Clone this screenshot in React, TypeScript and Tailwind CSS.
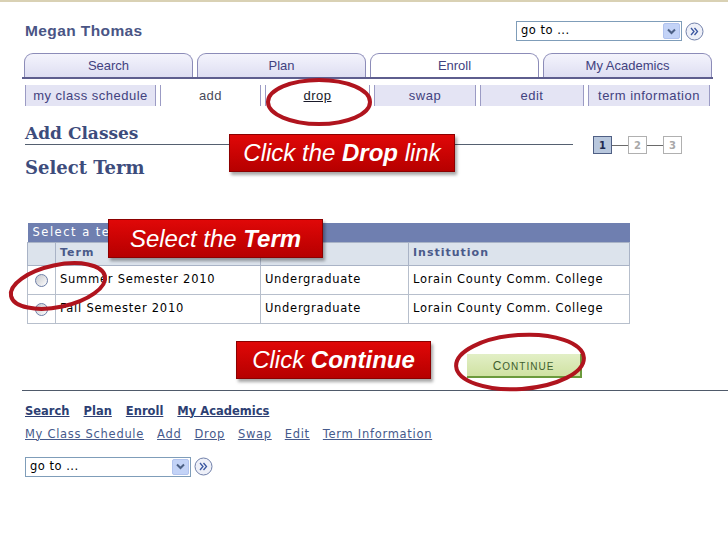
import React from "react";

const verdana = "font-['DejaVu_Sans',Verdana,sans-serif]";
const arial = "font-['Liberation_Sans',Arial,sans-serif]";
const serif = "font-['DejaVu_Serif',Georgia,serif]";

const tabs = [
  { label: "Search", active: false },
  { label: "Plan", active: false },
  { label: "Enroll", active: true },
  { label: "My Academics", active: false },
];

const subTabs = [
  { label: "my class schedule", cls: "w-[131px] bg-[#e4e4f4] text-[#42427f]" },
  { label: "add", cls: "w-[101px] bg-white text-[#4a4a5a]" },
  { label: "drop", cls: "w-[105px] bg-white text-[#1a1a2a] underline" },
  { label: "swap", cls: "w-[102px] bg-[#e4e4f4] text-[#42427f]" },
  { label: "edit", cls: "w-[104px] bg-[#e4e4f4] text-[#42427f]" },
  { label: "term information", cls: "w-[122px] bg-[#e4e4f4] text-[#42427f]" },
];

const terms = ["Summer Semester 2010", "Fall Semester 2010"];

function GoTo() {
  return (
    <div className="flex items-center gap-[3px]">
      <div className="flex h-[20px] w-[166px] items-center border border-[#7f9db9] bg-white pl-[4px] pr-[1px]">
        <span className={`flex-1 text-[11.5px] tracking-[0.5px] text-black ${verdana}`}>go to ...</span>
        <span className="flex h-[16px] w-[17px] items-center justify-center rounded-[2px] border border-[#b1c3ee] bg-[#c3d3f7]">
          <svg width="9" height="7" viewBox="0 0 9 7">
            <path d="M1 1.5 L4.5 5 L8 1.5" stroke="#4d6185" strokeWidth="2" fill="none" />
          </svg>
        </span>
      </div>
      <svg width="19" height="19" viewBox="0 0 19 19">
        <circle cx="9.5" cy="9.5" r="8.5" fill="#eef0f8" stroke="#7180aa" />
        <path d="M6 6 L9 9.5 L6 13 M9.5 6 L12.5 9.5 L9.5 13" stroke="#3a56a0" strokeWidth="1.3" fill="none" />
      </svg>
    </div>
  );
}

function Callout({ className, children }: { className: string; children: React.ReactNode }) {
  return (
    <div
      className={`absolute flex items-center justify-center border border-[#8c0000] bg-linear-to-b from-[#e00808] to-[#b60000] text-[24px] italic text-white shadow-[2px_3px_3px_rgba(0,0,0,0.35)] ${arial} ${className}`}
    >
      {children}
    </div>
  );
}

function Step({ n, on }: { n: number; on?: boolean }) {
  return (
    <div
      className={
        on
          ? `flex h-[18px] w-[19px] items-center justify-center border border-[#4f5f84] bg-[#b8c7dd] text-[10px] font-bold text-[#1d2a4f] ${verdana}`
          : `flex h-[18px] w-[19px] items-center justify-center border border-[#b0b0b0] bg-white text-[10px] font-bold text-[#a8a8a8] ${verdana}`
      }
    >
      {n}
    </div>
  );
}

export default function App() {
  return (
    <div className="relative h-[546px] w-[728px] overflow-hidden border-t-2 border-[#d9d1b4] bg-white">
      {/* header */}
      <div className="mt-[18px] flex h-[22px] items-center justify-between pl-[25px] pr-[24px]">
        <span className={`text-[15.5px] font-bold tracking-[0.4px] text-[#4a5585] ${arial}`}>Megan Thomas</span>
        <GoTo />
      </div>

      {/* tabs */}
      <div className="mt-[11px] ml-[22px] flex w-[691px] gap-[4px] border-b-2 border-[#5e5e8e] pl-[2px] pr-[1px]">
        {tabs.map((t) => (
          <div
            key={t.label}
            className={
              t.active
                ? `flex h-[24px] flex-1 items-center justify-center rounded-t-[9px] border border-b-0 border-[#8c8cb8] bg-white text-[13px] text-[#42427f] ${arial}`
                : `flex h-[24px] flex-1 items-center justify-center rounded-t-[9px] border border-b-0 border-[#8c8cb8] bg-linear-to-b from-[#f4f4fc] to-[#dedef2] text-[13px] text-[#42427f] ${arial}`
            }
          >
            {t.label}
          </div>
        ))}
      </div>

      {/* sub tabs */}
      <div className="mt-[6px] ml-[25px] flex h-[21px] gap-[4px]">
        {subTabs.map((s) => (
          <div
            key={s.label}
            className={`flex items-center justify-center border-x border-[#9b9bc4] text-[13px] tracking-[0.5px] ${arial} ${s.cls}`}
          >
            {s.label}
          </div>
        ))}
      </div>

      {/* page title */}
      <div className="mt-[16px] ml-[25px] flex items-end">
        <div className="w-[548px] border-b border-[#556070]">
          <div className={`text-[17px] font-bold leading-[22px] text-[#3d4c7c] ${serif}`}>Add Classes</div>
        </div>
        <div className="ml-[20px] -mb-[9px] flex items-center">
          <Step n={1} on />
          <div className="w-[16px] border-t border-[#6a6a6a]" />
          <Step n={2} />
          <div className="w-[16px] border-t border-[#6a6a6a]" />
          <Step n={3} />
        </div>
      </div>
      <div className={`mt-[12px] ml-[25px] text-[18px] font-bold leading-[22px] text-[#3d4c7c] ${serif}`}>Select Term</div>

      {/* term table */}
      <table className={`mt-[44px] ml-[27px] w-[602px] table-fixed border-collapse ${verdana}`}>
        <colgroup>
          <col className="w-[28px]" />
          <col className="w-[205px]" />
          <col className="w-[148px]" />
          <col className="w-[221px]" />
        </colgroup>
        <tbody>
          <tr className="h-[19px] bg-[#6f7fb0]">
            <td colSpan={4} className="pl-[5px] text-[11.5px] tracking-[1.5px] text-white">
              Select a term
            </td>
          </tr>
          <tr className="h-[23px] bg-[#dce3ec]">
            <td className="border border-[#a9b3c6]" />
            <td className="border border-[#a9b3c6] pl-[4px] text-[11px] font-bold tracking-[1px] text-[#4a5a8a]">Term</td>
            <td className="border border-[#a9b3c6] pl-[4px] text-[11px] font-bold tracking-[1px] text-[#4a5a8a]">Career</td>
            <td className="border border-[#a9b3c6] pl-[4px] text-[11px] font-bold tracking-[1px] text-[#4a5a8a]">Institution</td>
          </tr>
          {terms.map((t) => (
            <tr key={t} className="h-[29px] bg-white">
              <td className="border border-[#b7bfcc] text-center">
                <span className="inline-block h-[13px] w-[13px] rounded-full border border-[#6f80a8] bg-linear-to-br from-[#c4c6cc] to-white align-middle" />
              </td>
              <td className="border border-[#b7bfcc] pl-[4px] text-[11.5px] tracking-[0.75px] text-black">{t}</td>
              <td className="border border-[#b7bfcc] pl-[4px] text-[11.5px] tracking-[0.7px] text-black">Undergraduate</td>
              <td className="border border-[#b7bfcc] pl-[4px] text-[11.5px] tracking-[0.7px] text-black">Lorain County Comm. College</td>
            </tr>
          ))}
        </tbody>
      </table>

      {/* continue */}
      <div className="mt-[30px] ml-[467px] flex h-[24px] w-[115px] items-center justify-center border-r-2 border-b-2 border-[#6b9a3c] bg-linear-to-b from-[#e2efc6] to-[#d0e2a2]">
        <span className={`tracking-[1px] text-[#3f5f2f] ${arial}`}>
          <span className="text-[12px]">C</span>
          <span className="text-[10px]">ONTINUE</span>
        </span>
      </div>

      <div className="mt-[12px] ml-[22px] border-t border-[#4f5a6a]" />

      {/* footer links */}
      <div className={`mt-[11px] ml-[25px] flex gap-[14px] text-[11.5px] font-bold leading-[18px] text-[#2d3f73] ${verdana}`}>
        <span className="underline">Search</span>
        <span className="underline">Plan</span>
        <span className="underline">Enroll</span>
        <span className="underline">My Academics</span>
      </div>
      <div className={`mt-[5px] ml-[25px] flex gap-[13px] text-[11.5px] leading-[18px] tracking-[0.7px] text-[#465a8c] ${verdana}`}>
        {["My Class Schedule", "Add", "Drop", "Swap", "Edit", "Term Information"].map((l) => (
          <span key={l} className="underline">
            {l}
          </span>
        ))}
      </div>
      <div className="mt-[14px] ml-[25px]">
        <GoTo />
      </div>

      {/* tutorial overlays */}
      <svg className="pointer-events-none absolute left-0 top-0" width="728" height="546">
        <ellipse cx="319" cy="100" rx="51" ry="22" fill="none" stroke="#b0141e" strokeWidth="4" />
        <ellipse cx="58" cy="284" rx="48" ry="21" fill="none" stroke="#b0141e" strokeWidth="4" transform="rotate(-12 58 284)" />
        <ellipse cx="520" cy="360" rx="64" ry="27" fill="none" stroke="#b0141e" strokeWidth="4" transform="rotate(-4 520 360)" />
      </svg>
      <Callout className="left-[229px] top-[132px] h-[38px] w-[226px]">
        Click the&nbsp;<b>Drop</b>&nbsp;link
      </Callout>
      <Callout className="left-[108px] top-[217px] h-[39px] w-[215px]">
        Select the&nbsp;<b>Term</b>
      </Callout>
      <Callout className="left-[236px] top-[339px] h-[38px] w-[195px]">
        Click&nbsp;<b>Continue</b>
      </Callout>
    </div>
  );
}
